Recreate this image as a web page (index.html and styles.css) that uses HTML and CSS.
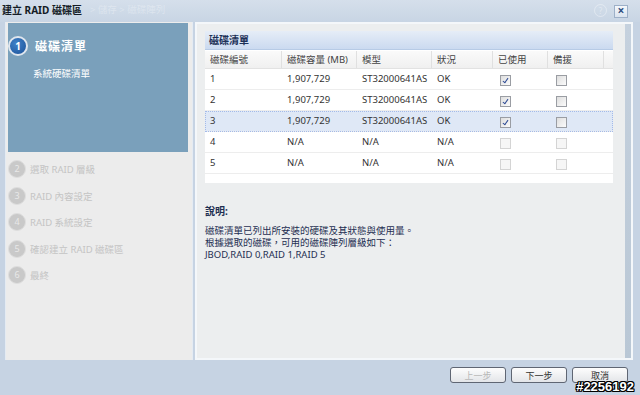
FILE: index.html
```html
<!DOCTYPE html>
<html lang="zh-Hant">
<head>
    <meta charset="UTF-8">
    <title>建立 RAID 磁碟區</title>
    <link rel="stylesheet" href="styles.css">
</head>
<body>
    <div class="window">
        <div class="titlebar">
            <span class="title">建立 RAID 磁碟區</span>
            <span class="crumb">&gt; 儲存 &gt; 磁碟陣列</span>
            <span class="help">?</span>
            <span class="close">&times;</span>
        </div>

        <div class="main">
            <!-- Wizard steps -->
            <div class="sidebar">
                <div class="current">
                    <div class="current-head"><span class="num-big">1</span><span class="current-title">磁碟清單</span></div>
                    <div class="current-sub">系統硬碟清單</div>
                </div>
                <ul class="steps">
                    <li><span class="num">2</span>選取 RAID 層級</li>
                    <li><span class="num">3</span>RAID 內容設定</li>
                    <li><span class="num">4</span>RAID 系統設定</li>
                    <li><span class="num">5</span>確認建立 RAID 磁碟區</li>
                    <li><span class="num">6</span>最終</li>
                </ul>
            </div>

            <!-- Disk list -->
            <div class="content">
                <div class="pane">
                    <div class="grid">
                        <div class="grid-title">磁碟清單</div>
                        <div class="grid-row grid-head">
                            <div>磁碟編號</div><div>磁碟容量 (MB)</div><div>模型</div><div>狀況</div><div>已使用</div><div>備援</div><div></div>
                        </div>
                        <div class="grid-row">
                            <div>1</div><div>1,907,729</div><div>ST32000641AS</div><div>OK</div><div><span class="cb checked"></span></div><div><span class="cb"></span></div><div></div>
                        </div>
                        <div class="grid-row">
                            <div>2</div><div>1,907,729</div><div>ST32000641AS</div><div>OK</div><div><span class="cb checked"></span></div><div><span class="cb"></span></div><div></div>
                        </div>
                        <div class="grid-row selected">
                            <div>3</div><div>1,907,729</div><div>ST32000641AS</div><div>OK</div><div><span class="cb checked"></span></div><div><span class="cb"></span></div><div></div>
                        </div>
                        <div class="grid-row">
                            <div>4</div><div>N/A</div><div>N/A</div><div>N/A</div><div><span class="cb off"></span></div><div><span class="cb off"></span></div><div></div>
                        </div>
                        <div class="grid-row">
                            <div>5</div><div>N/A</div><div>N/A</div><div>N/A</div><div><span class="cb off"></span></div><div><span class="cb off"></span></div><div></div>
                        </div>
                    </div>

                    <div class="desc">
                        <div class="desc-title">說明:</div>
                        <p>磁碟清單已列出所安裝的硬碟及其狀態與使用量。<br>根據選取的磁碟，可用的磁碟陣列層級如下：<br>JBOD,RAID 0,RAID 1,RAID 5</p>
                    </div>
                </div>
                <div class="rail"></div>
            </div>
        </div>

        <div class="footer">
            <button disabled>上一步</button>
            <button>下一步</button>
            <button>取消</button>
        </div>

        <div class="stamp">#2256192</div>
    </div>
</body>
</html>
```

FILE: styles.css
```css
body {
    margin: 0;
    width: 640px;
    height: 395px;
    overflow: hidden;
    background: #c6d3e3;
    font-family: "Noto Sans", "Noto Sans CJK TC", sans-serif;
    font-size: 9.5px;
    color: #333;
}
.window {
    position: relative;
    height: 395px;
    display: flex;
    flex-direction: column;
}

/* Title bar */
.titlebar {
    height: 22px;
    box-sizing: border-box;
    padding: 4px 0 0 2px;
    display: flex;
    align-items: flex-start;
    line-height: 12px;
    background: linear-gradient(#d5dfeb, #c8d5e4);
}
.title {
    font-weight: bold;
    font-size: 10px;
    color: #141c26;
}
.crumb {
    margin-left: 8px;
    color: rgba(255, 255, 255, 0.3);
    font-size: 9.5px;
}
.help {
    margin-left: auto;
    width: 11px;
    height: 11px;
    border: 1px solid rgba(255, 255, 255, 0.35);
    border-radius: 50%;
    font-size: 8px;
    line-height: 11px;
    text-align: center;
    color: rgba(255, 255, 255, 0.4);
}
.close {
    margin: 1px 12px 0 7px;
    width: 12px;
    height: 11px;
    border: 1px solid #9db0c8;
    background: linear-gradient(#f4f7fb, #dbe4ef);
    color: #2e4f80;
    font-size: 12px;
    font-weight: bold;
    line-height: 10px;
    text-align: center;
}

/* Layout */
.main {
    height: 338px;
    display: flex;
    gap: 2px;
    padding: 0 7px 0 5px;
}

/* Sidebar */
.sidebar {
    width: 188px;
    box-sizing: border-box;
    background: #ececec;
    border-left: 1px solid #e4ebf3;
    border-right: 1px solid #e4ebf3;
    padding: 1px 4px 0 2px;
}
.current {
    height: 129px;
    box-sizing: border-box;
    background: #7aa0bb;
    padding-top: 13px;
}
.current-head {
    display: flex;
    align-items: center;
    gap: 7px;
}
.num-big {
    width: 16px;
    height: 16px;
    border: 2px solid #dfe6ee;
    border-radius: 50%;
    background: radial-gradient(circle at 40% 35%, #3f82c9, #1c5198);
    color: #fff;
    font-weight: bold;
    font-size: 10px;
    line-height: 16px;
    text-align: center;
}
.current-title {
    color: #fff;
    font-weight: bold;
    font-size: 12px;
    letter-spacing: 1px;
}
.current-sub {
    margin: 12px 0 0 25px;
    color: #fff;
    font-size: 9.5px;
    line-height: 12px;
}
.steps {
    list-style: none;
    margin: 0;
    padding: 4px 0 0 0;
}
.steps li {
    height: 26.5px;
    display: flex;
    align-items: center;
    gap: 4px;
    color: #c4c4c4;
    font-size: 9.5px;
}
.num {
    width: 16px;
    height: 16px;
    border: 1px solid #dedede;
    border-radius: 50%;
    background: #c9c9c9;
    color: #e8e8e8;
    font-size: 9px;
    line-height: 16px;
    text-align: center;
}

/* Content */
.content {
    width: 438px;
    box-sizing: border-box;
    border: 2px solid #f4f7fa;
    background: #eceeef;
    display: flex;
}
.pane {
    flex: 1;
    padding: 7px 0 0 8px;
}
.rail {
    width: 6px;
    background: linear-gradient(#c5d1de, #b9c7d5);
}

/* Grid */
.grid {
    width: 408px;
    background: #fff;
    padding-bottom: 9px;
}
.grid-title {
    height: 19px;
    box-sizing: border-box;
    padding: 3px 0 0 4px;
    line-height: 13px;
    font-weight: bold;
    font-size: 10px;
    color: #1d3158;
    background: linear-gradient(#e6edf7, #cbdaf0);
    border-bottom: 1px solid #b7cbe6;
}
.grid-row {
    display: grid;
    grid-template-columns: 77px 75px 75px 61px 55px 56px 1fr;
    height: 21px;
    box-sizing: border-box;
    border-bottom: 1px solid #ededed;
    line-height: 13px;
}
.grid-row > div {
    padding: 3px 0 0 5px;
    white-space: nowrap;
    overflow: hidden;
}
.grid-head {
    height: 18px;
    margin-top: 1px;
    background: linear-gradient(#fafafa, #f0f0f0);
    border-bottom: 1px solid #e2e2e2;
    color: #444;
}
.grid-head > div {
    padding-top: 2px;
    border-right: 1px solid #e0e0e0;
}
.grid-head > div:last-child {
    border-right: none;
}
.grid-row.selected {
    background: #dfe8f6;
    outline: 1px dotted #a3bae9;
    outline-offset: -1px;
}
.grid-row > div:nth-child(5) {
    padding: 6px 0 0 7px;
}
.grid-row > div:nth-child(6) {
    padding: 6px 0 0 8px;
}
.grid-head > div:nth-child(5),
.grid-head > div:nth-child(6) {
    padding: 2px 0 0 5px;
}
.cb {
    display: block;
    width: 9px;
    height: 9px;
    border: 1px solid #9a9da3;
    background: linear-gradient(135deg, #dedede, #fbfbfb);
    position: relative;
}
.cb.checked::after {
    content: "";
    position: absolute;
    left: 3px;
    top: 1px;
    width: 2px;
    height: 5px;
    border: solid #2d4a94;
    border-width: 0 1.5px 1.5px 0;
    transform: rotate(35deg);
}
.cb.off {
    border-color: #d4d4d4;
    background: #f6f6f6;
}

/* Description */
.desc {
    margin-top: 22px;
    color: #1f2f52;
}
.desc-title {
    font-weight: bold;
    font-size: 10px;
    line-height: 12px;
}
.desc p {
    margin: 8px 0 0 0;
    line-height: 12px;
}

/* Footer */
.footer {
    flex: 1;
    display: flex;
    justify-content: flex-end;
    align-items: flex-start;
    gap: 5px;
    padding: 7px 12px 0 0;
}
button {
    width: 56px;
    height: 16px;
    padding: 0;
    border: 1px solid #5f6673;
    border-radius: 3px;
    background: linear-gradient(#fdfdfd, #e3e5e8);
    font-family: "Noto Sans", "Noto Sans CJK TC", sans-serif;
    font-size: 9px;
    line-height: 13px;
    color: #333;
}
button:disabled {
    color: #b8b8b8;
}

.stamp {
    position: absolute;
    right: 6px;
    bottom: 1px;
    font-family: "Liberation Sans", sans-serif;
    font-weight: bold;
    font-size: 13px;
    line-height: 15px;
    color: #fff;
    text-shadow: -1px -1px 0 #000, 1px -1px 0 #000, -1px 1px 0 #000, 1px 1px 0 #000, 0 1px 0 #000, 0 -1px 0 #000, 1px 0 0 #000, -1px 0 0 #000;
}
```
